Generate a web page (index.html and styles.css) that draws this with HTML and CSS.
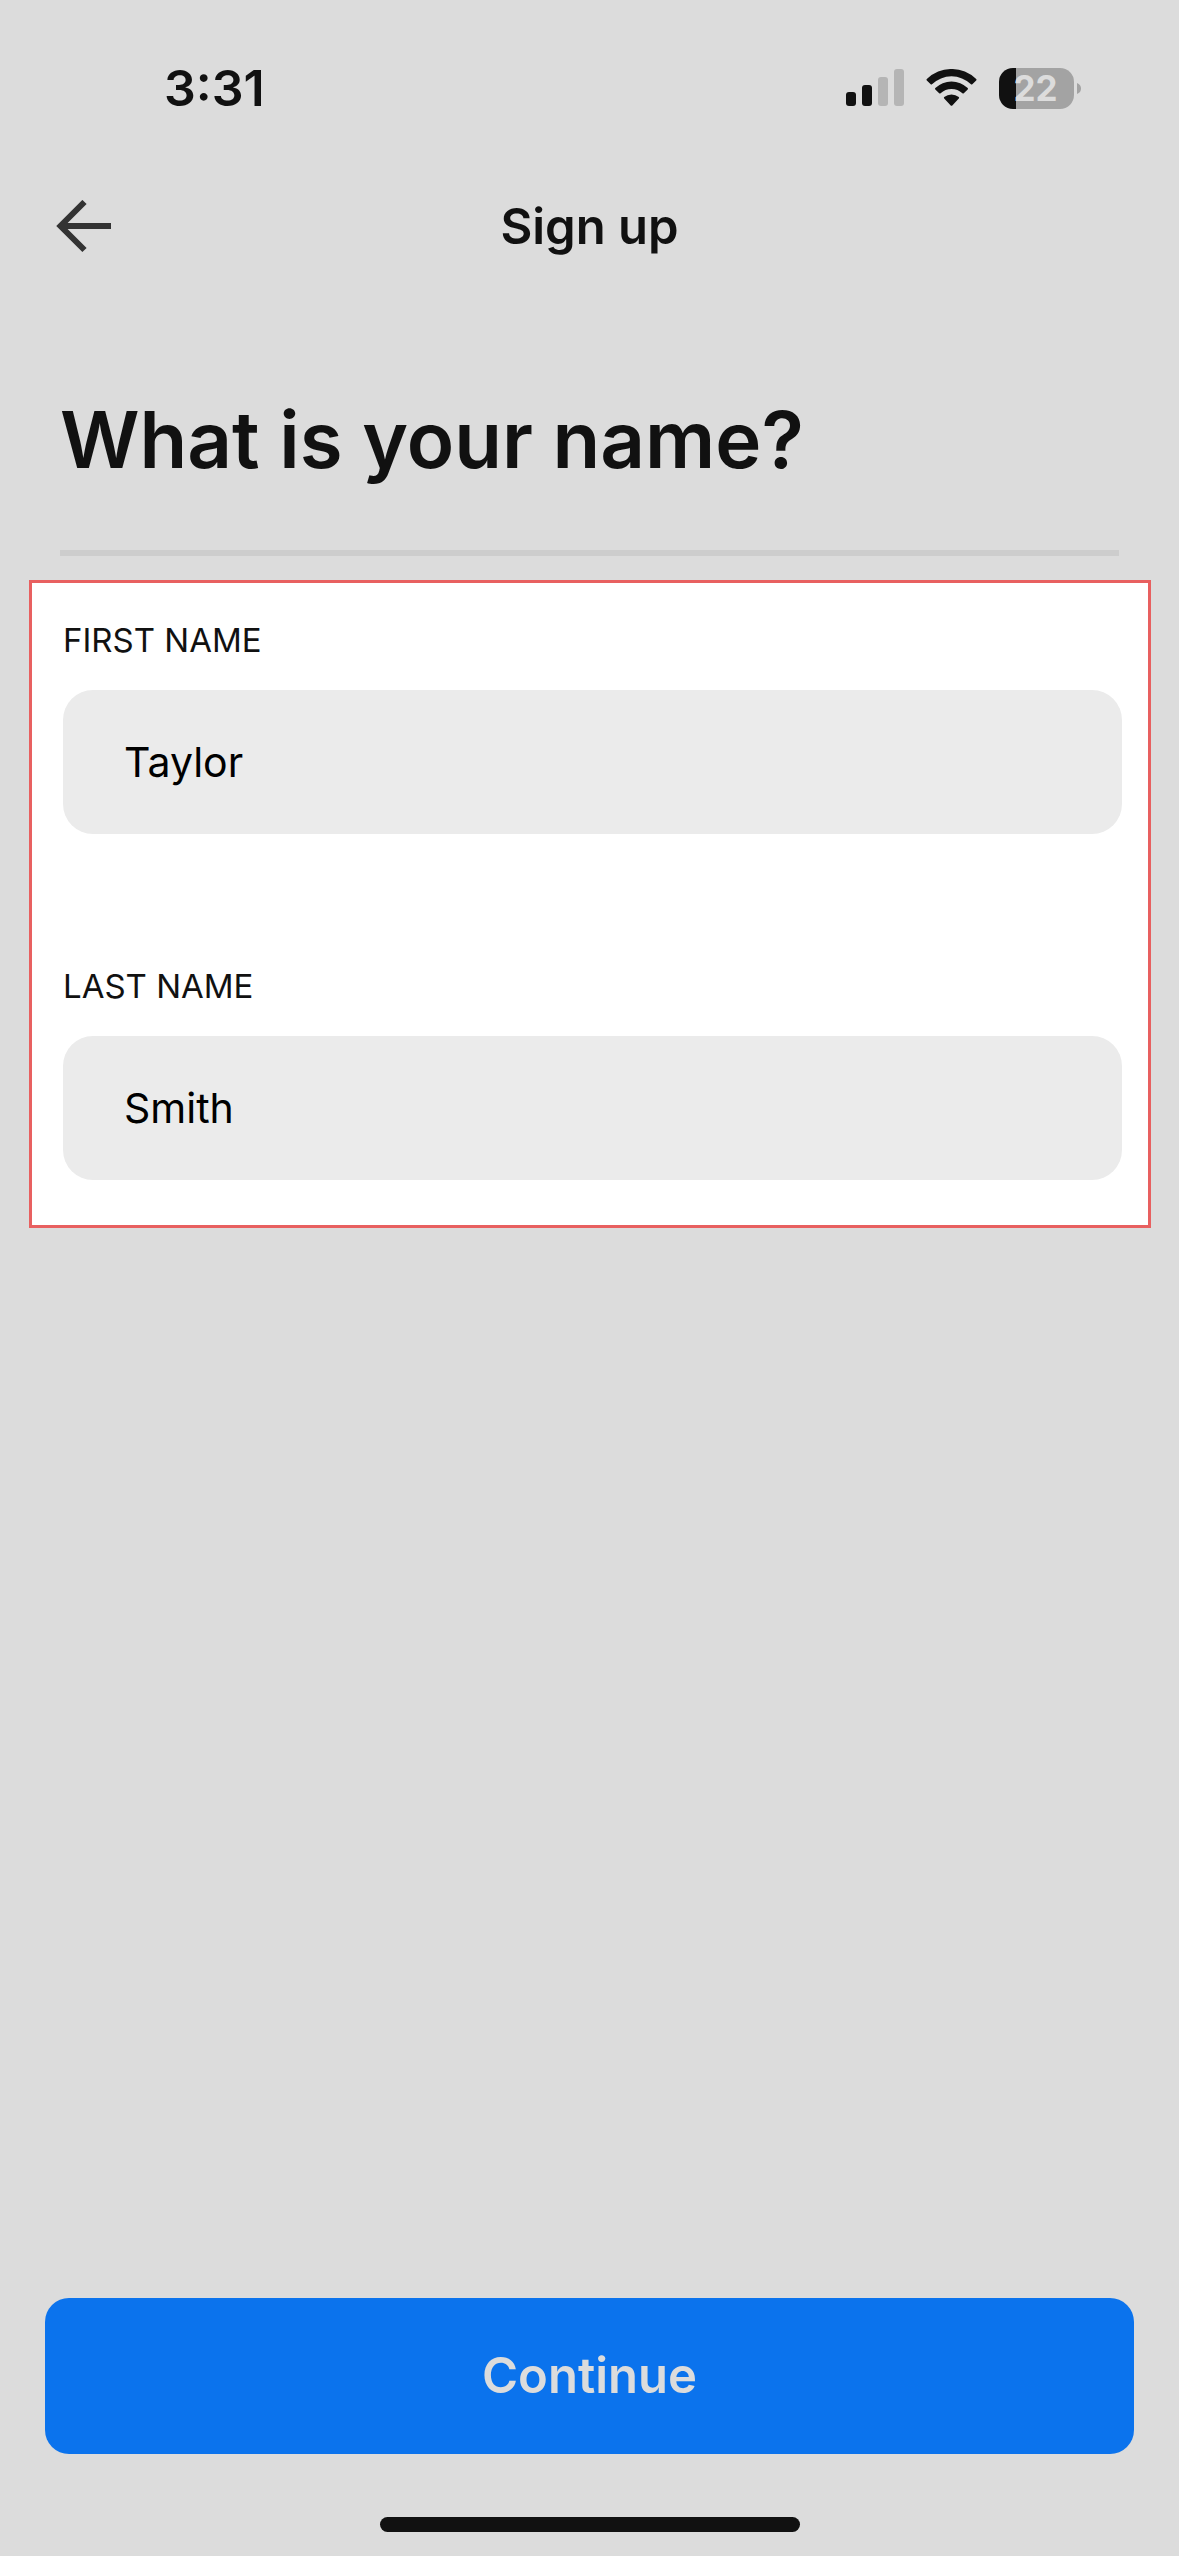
FILE: index.html
```html
<!DOCTYPE html>
<html lang="en">
<head>
<meta charset="utf-8">
<meta name="viewport" content="width=device-width, initial-scale=1">
<title>Sign up</title>
<link rel="stylesheet" href="styles.css">
</head>
<body>
<div class="status">
  <span class="time">3:31</span>
  <div class="indicators">
    <svg class="signal" width="58" height="38" viewBox="0 0 58 38" role="img" aria-label="Signal: 2 of 4 bars">
      <rect x="0" y="23" width="10" height="14" rx="3" fill="#111"/>
      <rect x="16" y="16" width="10" height="21" rx="3" fill="#111"/>
      <rect x="32" y="8" width="10" height="29" rx="3" fill="#b5b5b5"/>
      <rect x="48" y="0" width="10" height="37" rx="3" fill="#b5b5b5"/>
    </svg>
    <svg class="wifi" width="51" height="38" viewBox="0 0 51 38" role="img" aria-label="Wi-Fi" fill="#111">
      <path d="M0.8 10.1A35.2 35.2 0 0 1 50.2 10.1Q50.8 10.8 50.2 11.4L46.3 15.2Q45.7 15.8 45 15.2A28.2 28.2 0 0 0 6 15.2Q5.3 15.8 4.7 15.2L0.8 11.4Q0.2 10.8 0.8 10.1Z"/>
      <path d="M9.3 19.1A23.2 23.2 0 0 1 41.7 19.1Q42.3 19.8 41.7 20.4L37.8 24.3Q37.1 24.9 36.4 24.3A15.8 15.8 0 0 0 14.6 24.3Q13.9 24.9 13.2 24.3L9.3 20.4Q8.7 19.8 9.3 19.1Z"/>
      <path d="M18.2 28.1A11.5 11.5 0 0 1 32.8 28.1Q33.5 28.8 32.8 29.5L26.3 36.4Q25.5 37.2 24.7 36.4L18.2 29.5Q17.5 28.8 18.2 28.1Z"/>
    </svg>
    <div class="battery">
      <div class="cell">22</div>
      <svg width="4" height="11" viewBox="0 0 4 11" aria-hidden="true"><path d="M0 0Q4 1.5 4 5.5T0 11Z" fill="#a3a3a3"/></svg>
    </div>
  </div>
</div>
<header class="nav">
  <button class="back" type="button" aria-label="Back">
    <svg width="58" height="54" viewBox="0 0 58 54" fill="none" stroke="#333" stroke-width="6" aria-hidden="true"><path d="M55 26H6M28.5 2L4.5 26L28.5 50"/></svg>
  </button>
  <p class="nav-title">Sign up</p>
</header>
<form class="form">
  <h1>What is your name?</h1>
  <hr>
  <div class="fields">
    <div class="field">
      <label for="first">FIRST NAME</label>
      <input id="first" type="text" value="Taylor">
    </div>
    <div class="field">
      <label for="last">LAST NAME</label>
      <input id="last" type="text" value="Smith">
    </div>
  </div>
  <button class="continue" type="submit">Continue</button>
</form>
<div class="home"></div>
</body>
</html>
```
FILE: styles.css
```css
* {
  box-sizing: border-box;
}

body {
  margin: 0;
  min-height: 100vh;
  display: flex;
  flex-direction: column;
  background: #dcdcdc;
  color: #111;
  font-family: Inter, "Liberation Sans", sans-serif;
}

.status {
  display: flex;
  justify-content: space-between;
  align-items: center;
  padding: 58px 98px 0 164px;
}

.time {
  font-size: 50px;
  line-height: 60px;
  font-weight: 600;
}

.indicators {
  display: flex;
  align-items: center;
  gap: 22px;
}

.battery {
  display: flex;
  align-items: center;
  gap: 3px;
}

.cell {
  width: 75px;
  padding-right: 2px;
  border-radius: 14px;
  background: linear-gradient(to right, #111 17px, #a3a3a3 17px);
  color: #dcdcdc;
  font-size: 35px;
  line-height: 41px;
  font-weight: 700;
  text-align: center;
}

.nav {
  display: grid;
  grid-template-columns: 1fr auto 1fr;
  align-items: center;
  margin-top: 79px;
  padding: 0 56px;
}

.back {
  justify-self: start;
  display: flex;
  padding: 0;
  border: 0;
  background: none;
}

.nav-title {
  margin: 0;
  font-size: 49px;
  line-height: 60px;
  font-weight: 600;
}

.form {
  flex: 1;
  display: flex;
  flex-direction: column;
  margin-top: 135px;
}

h1 {
  margin: 0 60px;
  font-size: 78px;
  line-height: 96px;
  font-weight: 600;
}

hr {
  width: auto;
  height: 6px;
  margin: 62px 60px 24px;
  border: 0;
  background: #cdcdcd;
}

.fields {
  display: flex;
  flex-direction: column;
  gap: 131px;
  margin: 0 28px 0 29px;
  padding: 36px 26px 45px 31px;
  border: 3px solid #e86060;
  background: #fff;
}

.field {
  display: flex;
  flex-direction: column;
  gap: 29px;
}

label {
  font-size: 33px;
  line-height: 42px;
}

input {
  width: 100%;
  height: 144px;
  padding: 0 61px;
  border: 0;
  border-radius: 30px;
  background: #ebebeb;
  color: #000;
  font: 400 41px/50px Inter, "Liberation Sans", sans-serif;
}

.continue {
  margin: auto 45px 63px;
  padding: 48px;
  border: 0;
  border-radius: 24px;
  background: #0b73ed;
  color: #dcdcdc;
  font: 600 49px/60px Inter, "Liberation Sans", sans-serif;
}

.home {
  align-self: center;
  width: 420px;
  max-width: 60%;
  height: 15px;
  margin-bottom: 24px;
  border-radius: 8px;
  background: #111;
}
```
